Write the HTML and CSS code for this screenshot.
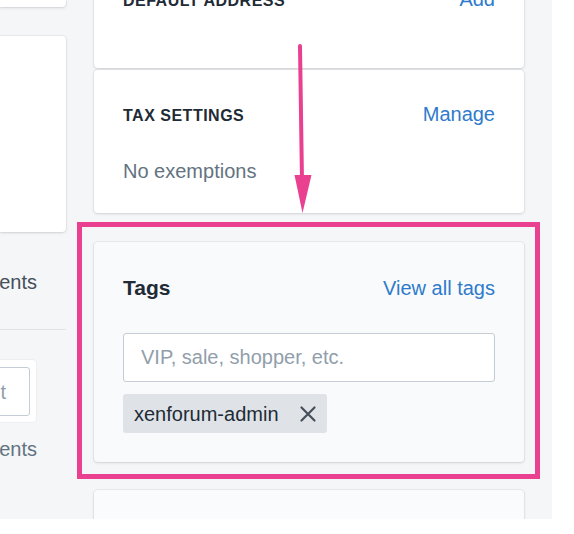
FILE: index.html
```html
<!DOCTYPE html>
<html lang="en">
<head>
<meta charset="utf-8">
<title>Customer tags</title>
<link rel="stylesheet" href="styles.css">
</head>
<body>
<div class="page">
  <div class="left">
    <div class="lcard lcard-top"></div>
    <div class="lcard lcard-main"></div>
    <div class="lrow lrow-dark"><span>Email agreements</span></div>
    <div class="ldivider"></div>
    <div class="lbtn-row">
      <div class="lbtn-wrap"><div class="lbtn">Accept</div></div>
    </div>
    <div class="lrow lrow-muted"><span>SMS agreements</span></div>
  </div>

  <div class="right">
    <div class="card card-address">
      <div class="sec-head">
        <h3 class="subheading">Default address</h3>
        <a class="link" href="#">Add</a>
      </div>
    </div>

    <div class="card card-tax">
      <div class="sec-head">
        <h3 class="subheading">Tax settings</h3>
        <a class="link" href="#">Manage</a>
      </div>
      <p class="muted">No exemptions</p>
    </div>

    <div class="card card-tags">
      <div class="sec-head">
        <h2 class="heading">Tags</h2>
        <a class="link" href="#">View all tags</a>
      </div>
      <input class="tag-input" type="text" placeholder="VIP, sale, shopper, etc.">
      <div class="tag-list">
        <span class="tag">xenforum-admin
          <svg class="tag-x" viewBox="0 0 18 18" width="18" height="18" aria-hidden="true">
            <path d="M2.5 2.5 L15.5 15.5 M15.5 2.5 L2.5 15.5" stroke="currentColor" stroke-width="2.2" stroke-linecap="round" fill="none"/>
          </svg>
        </span>
      </div>
    </div>

    <div class="card card-next"></div>
  </div>

  <div class="annot-box"></div>
  <svg class="annot-arrow" width="30" height="180" viewBox="0 0 30 180" aria-hidden="true">
    <path d="M5 0 L7 136" stroke="#e9408f" stroke-width="4" stroke-linecap="round" fill="none"/>
    <path d="M-0.5 129 L16.5 129 L7.5 167 Z" fill="#e9408f"/>
  </svg>
</div>
</body>
</html>
```

FILE: styles.css
```css
* {
  box-sizing: border-box;
}

html, body {
  margin: 0;
  padding: 0;
  background: #ffffff;
}

body {
  font-family: "Liberation Sans", Arial, sans-serif;
  font-size: 20px;
  line-height: 28px;
  color: #212b36;
}

.page {
  position: relative;
  width: 552px;
  height: 519px;
  background: #f4f6f8;
  overflow: hidden;
  display: flex;
  align-items: flex-start;
  gap: 28px;
}

/* left column (cut off) */
.left {
  width: 66px;
  flex: none;
  display: flex;
  flex-direction: column;
}

.left > * {
  flex: none;
}

.lcard {
  background: #ffffff;
  border-radius: 0 4px 4px 0;
  box-shadow: 0 0 0 1px rgba(63, 63, 68, 0.05), 0 1px 3px 0 rgba(63, 63, 68, 0.15);
}

.lcard-top {
  height: 7px;
  border-radius: 0 0 4px 0;
}

.lcard-main {
  margin-top: 29px;
  height: 196px;
}

.lrow {
  display: flex;
  justify-content: flex-end;
  padding-right: 29px;
  white-space: nowrap;
}

.lrow-dark {
  margin-top: 36px;
  color: #454f5b;
}

.lrow-muted {
  margin-top: 13px;
  color: #637381;
}

.ldivider {
  margin-top: 33px;
  height: 1px;
  background: #dfe3e8;
}

.lbtn-row {
  margin-top: 30px;
  display: flex;
  justify-content: flex-end;
  padding-right: 30px;
}

.lbtn-wrap {
  flex: none;
  background: #ffffff;
  padding: 7px 6px 6px 6px;
  border-radius: 0 4px 4px 0;
  box-shadow: 0 0 0 1px rgba(63, 63, 68, 0.04);
}

.lbtn {
  height: 49px;
  display: flex;
  align-items: center;
  padding: 0 23px 0 24px;
  border: 1px solid #c4cdd5;
  border-radius: 3px;
  color: #919eab;
  white-space: nowrap;
}

/* right column */
.right {
  width: 430px;
  flex: none;
  display: flex;
  flex-direction: column;
}

.right > * {
  flex: none;
}

.card {
  background: #ffffff;
  border-radius: 4px;
  box-shadow: 0 0 0 1px rgba(63, 63, 68, 0.05), 0 1px 3px 0 rgba(63, 63, 68, 0.15);
  padding: 30px 29px 29px 29px;
}

.card-address {
  margin-top: -45px;
  height: 113px;
  border-radius: 0 0 4px 4px;
}

.card-tax {
  margin-top: 2px;
  height: 143px;
}

.card-tags {
  margin-top: 29px;
  height: 220px;
  background: #f9fafb;
}

.card-next {
  margin-top: 28px;
  height: 80px;
  background: #fafbfc;
}

.sec-head {
  display: flex;
  justify-content: space-between;
  align-items: baseline;
}

.subheading {
  margin: 0;
  font-size: 16px;
  font-weight: 700;
  text-transform: uppercase;
  letter-spacing: 0.5px;
  line-height: 28px;
  color: #212b36;
}

.heading {
  margin: 0;
  font-size: 21px;
  font-weight: 700;
  line-height: 32px;
  color: #212b36;
}

.link {
  color: #2f7bcb;
  text-decoration: none;
  font-size: 20px;
  line-height: 28px;
}

.muted {
  margin: 27px 0 0 0;
  color: #637381;
}

.tag-input {
  display: block;
  width: 100%;
  height: 49px;
  margin-top: 29px;
  padding: 0 17px;
  border: 1px solid #c4cdd5;
  border-radius: 3px;
  background: #ffffff;
  font-family: "Liberation Sans", Arial, sans-serif;
  font-size: 20px;
  color: #212b36;
  outline: none;
}

.tag-input::placeholder {
  color: #919eab;
}

.tag-list {
  display: flex;
  margin-top: 12px;
}

.tag {
  display: inline-flex;
  align-items: center;
  gap: 20px;
  height: 39px;
  padding: 0 10px 0 11px;
  background: #dfe3e8;
  border-radius: 3px;
  color: #212b36;
  white-space: nowrap;
}

.tag-x {
  display: block;
  color: #454f5b;
}

/* annotations over the screenshot */
.annot-box {
  position: absolute;
  left: 77px;
  top: 222px;
  width: 463px;
  height: 257px;
  border: 5px solid #e9408f;
}

.annot-arrow {
  position: absolute;
  left: 295px;
  top: 46px;
  overflow: visible;
}
```
